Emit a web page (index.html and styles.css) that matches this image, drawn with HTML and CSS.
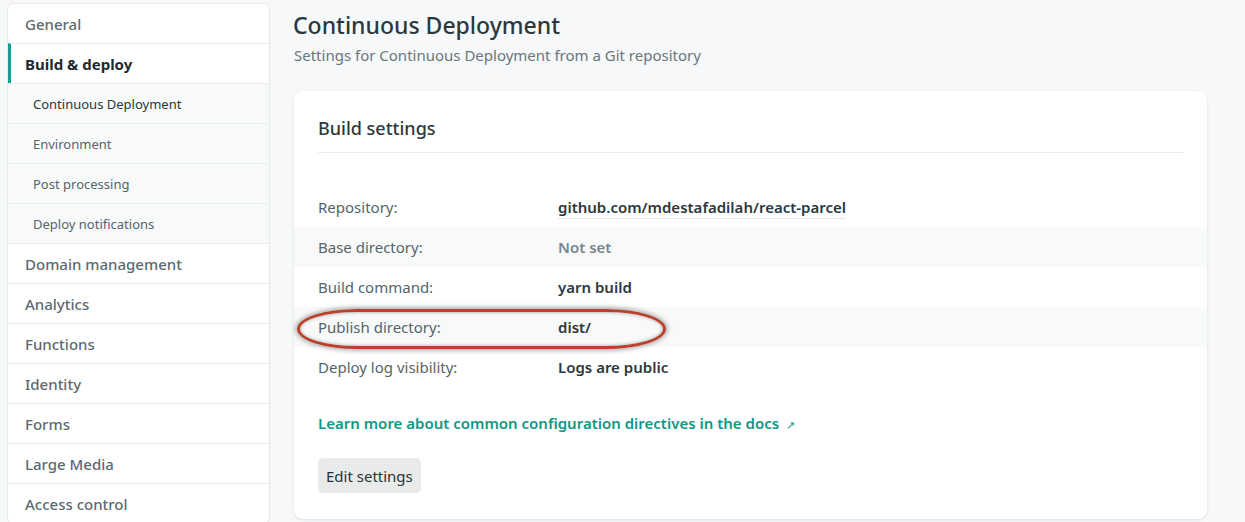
FILE: index.html
```html
<!DOCTYPE html>
<html>
<head>
<meta charset="utf-8">
<link rel="stylesheet" href="styles.css">
</head>
<body>
<div class="page">
  <nav class="sidebar">
    <a class="nav-item">General</a>
    <a class="nav-item active">Build &amp; deploy</a>
    <a class="nav-sub current">Continuous Deployment</a>
    <a class="nav-sub">Environment</a>
    <a class="nav-sub">Post processing</a>
    <a class="nav-sub">Deploy notifications</a>
    <a class="nav-item">Domain management</a>
    <a class="nav-item">Analytics</a>
    <a class="nav-item">Functions</a>
    <a class="nav-item">Identity</a>
    <a class="nav-item">Forms</a>
    <a class="nav-item">Large Media</a>
    <a class="nav-item">Access control</a>
  </nav>
  <main class="main">
    <h1 class="title">Continuous Deployment</h1>
    <p class="subtitle">Settings for Continuous Deployment from a Git repository</p>
    <section class="card">
      <h2 class="card-title">Build settings</h2>
      <dl class="settings">
        <div class="row"><dt>Repository:</dt><dd><span class="repo">github.com/mdestafadilah/react-parcel</span></dd></div>
        <div class="row shaded"><dt>Base directory:</dt><dd class="muted">Not set</dd></div>
        <div class="row"><dt>Build command:</dt><dd>yarn build</dd></div>
        <div class="row shaded highlight"><dt>Publish directory:</dt><dd>dist/</dd><span class="ring"></span></div>
        <div class="row"><dt>Deploy log visibility:</dt><dd>Logs are public</dd></div>
      </dl>
      <a class="doc-link">Learn more about common configuration directives in the docs <span class="arrow">↗</span></a>
      <button class="btn">Edit settings</button>
    </section>
  </main>
</div>
</body>
</html>
```

FILE: styles.css
```css
* { box-sizing: border-box; }
html, body { margin: 0; padding: 0; }
body {
  background: #f6f8f9;
  font-family: "Noto Sans", "Open Sans", sans-serif;
  color: #2e3a40;
  width: 1245px;
  height: 522px;
  overflow: hidden;
}
.page {
  display: flex;
  align-items: flex-start;
  padding: 3px 0 0 7px;
  gap: 24px;
}
.sidebar {
  width: 263px;
  flex: none;
  display: flex;
  flex-direction: column;
  background: #fff;
  border: 1px solid #e6e9ea;
  border-radius: 6px;
  overflow: hidden;
}
.nav-item, .nav-sub {
  flex: none;
  display: flex;
  align-items: center;
  height: 40px;
  border-top: 1px solid #e9ecec;
  color: #5d6a70;
}
.nav-item:first-child { border-top: none; height: 39px; }
.nav-item {
  padding-left: 17px;
  font-size: 15px;
  font-weight: 500;
}
.nav-item.active {
  border-left: 3px solid #14a091;
  padding-left: 14px;
  color: #1f2b30;
  font-weight: 700;
}
.nav-sub {
  background: #f8f9f9;
  padding-left: 25px;
  font-size: 13px;
  color: #56646a;
}
.nav-sub.current { color: #2b373c; }
.main {
  width: 913px;
  flex: none;
}
.title {
  margin: 6px 0 0 -1px;
  font-size: 23px;
  font-weight: 500;
  line-height: 32px;
  color: #2b383e;
}
.subtitle {
  margin: 3px 0 0;
  font-size: 15px;
  line-height: 22px;
  color: #69767b;
}
.card {
  margin-top: 25px;
  background: #fff;
  border-radius: 9px;
  box-shadow: 0 1px 3px rgba(40, 60, 70, 0.12);
  padding: 24px 24px 26px;
  display: flex;
  flex-direction: column;
  align-items: flex-start;
  height: 428px;
}
.card > * { flex: none; }
.card-title {
  margin: 0;
  width: 100%;
  font-size: 18px;
  font-weight: 500;
  line-height: 26px;
  padding-bottom: 11px;
  border-bottom: 1px solid #eaeded;
  color: #2b383e;
}
.settings {
  margin: 34px -24px 0;
  width: calc(100% + 48px);
}
.row {
  position: relative;
  display: flex;
  align-items: center;
  height: 40px;
  padding-left: 24px;
  font-size: 15px;
}
.row.shaded { background: #f8f9f9; }
.row dt {
  width: 240px;
  color: #56646a;
}
.row dd {
  margin: 0;
  font-weight: 600;
  color: #2b383e;
}
.row dd.muted { color: #7b878c; }
.repo {
  border-bottom: 1px solid #e3e7e8;
  padding-bottom: 1px;
}
.ring {
  position: absolute;
  left: 3px;
  top: 2px;
  width: 369px;
  height: 40px;
  border: 3px solid #b9402c;
  border-radius: 60px / 20px;
  box-shadow: 0 0 4px 2px rgba(90, 90, 90, 0.45), inset 0 0 3px 1px rgba(90, 90, 90, 0.35);
  pointer-events: none;
}
.doc-link {
  margin-top: 25px;
  font-size: 15px;
  font-weight: 600;
  color: #0f9785;
  line-height: 22px;
}
.arrow { font-size: 11px; font-weight: 400; margin-left: 3px; }
.btn {
  margin-top: 22px;
  height: 35px;
  padding: 0 8px;
  border: none;
  border-radius: 5px;
  background: #e9ebeb;
  font-family: inherit;
  font-size: 15px;
  color: #26323a;
}
```
